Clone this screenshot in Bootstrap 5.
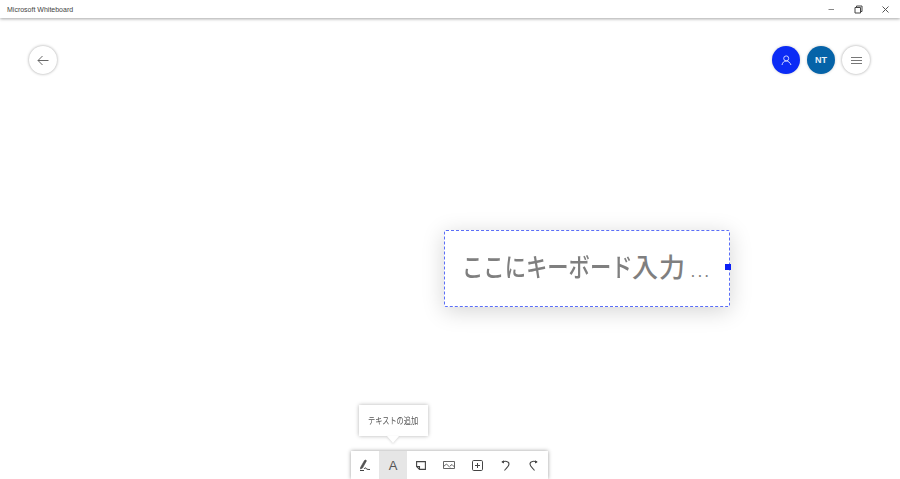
<!DOCTYPE html>
<html lang="ja">
<head>
<meta charset="utf-8">
<title>Microsoft Whiteboard</title>
<link href="https://cdn.jsdelivr.net/npm/bootstrap@5.3.0/dist/css/bootstrap.min.css" rel="stylesheet">
<style>
html,body{height:479px;overflow:hidden;background:#fff;}
body{font-family:"Noto Sans CJK JP","Liberation Sans",sans-serif;}
.wb-shell{height:479px;position:relative;}
.wb-title{height:18px;padding:0 1px 0 7px;box-shadow:0 1px 3px rgba(0,0,0,.35);font:7px/17px "Liberation Sans",sans-serif;color:#444;position:relative;z-index:2;}
.wb-win span{width:27px;height:17px;display:flex;align-items:center;justify-content:center;}
.wb-top{padding:28px 30px 0 28.5px;}
.wb-circ{width:28px;height:28px;border-radius:50%;background:#fff;box-shadow:0 0 3px rgba(0,0,0,.38);display:flex;align-items:center;justify-content:center;padding:0;border:0;}
.wb-right{gap:7px;}
.wb-blue{background:#0b2bf5;box-shadow:0 0 3px rgba(0,0,0,.2);}
.wb-nt{background:#0563a8;color:#e8f0f8;font:600 9px/1 "Liberation Sans",sans-serif;box-shadow:0 0 3px rgba(0,0,0,.2);}
.wb-textbox{position:absolute;left:444px;top:230px;width:286px;height:77px;background:#fff;border:1px dashed #5a6ef7;border-radius:2px;box-shadow:0 4px 22px rgba(0,0,0,.17);color:#7f7f7f;font:500 26px/1 "Noto Sans CJK JP",sans-serif;display:flex;align-items:center;padding:0 0 5px 17px;white-space:nowrap;}
.wb-kana{display:inline-block;width:170px;transform:scaleX(.82);transform-origin:left center;}
.wb-kanji{letter-spacing:1px;}
.wb-dots{font-size:13px;letter-spacing:3px;margin-left:5px;padding-top:11px;}
.wb-handle{position:absolute;right:-2px;top:33px;width:6px;height:6px;background:#0b1ff5;}
.wb-bar{height:28px;background:#fff;box-shadow:0 0 4px rgba(0,0,0,.4);width:197px;}
.wb-barwrap{position:absolute;left:351px;top:451px;}
.wb-tool{width:28px;height:28px;display:flex;align-items:center;justify-content:center;padding:0;border:0;background:transparent;color:#555;font:13px/1 "Liberation Sans",sans-serif;}
.wb-tool.wb-on{background:#e6e6e6;}
.wb-tip{position:absolute;left:8px;top:-46px;width:69px;height:31px;background:#fff;box-shadow:0 0 4px rgba(0,0,0,.3);font:9px/31px "Noto Sans CJK JP",sans-serif;color:#555;white-space:nowrap;padding-left:9px;}
.wb-tiptext{display:inline-block;transform:scaleX(.8);transform-origin:left center;}
.wb-tip::after{content:"";position:absolute;left:28px;top:31px;border-left:6px solid transparent;border-right:6px solid transparent;border-top:7px solid #fff;filter:drop-shadow(0 1px 1px rgba(0,0,0,.15));}
svg{display:block;}
</style>
</head>
<body class="m-0">
<div class="wb-shell">
  <div class="wb-title d-flex justify-content-between align-items-center">
    <span>Microsoft Whiteboard</span>
    <div class="wb-win d-flex">
      <span><svg width="9" height="9" viewBox="0 0 9 9"><path d="M1.5 4.5H7" stroke="#888" fill="none"/></svg></span>
      <span><svg width="9" height="9" viewBox="0 0 9 9"><path d="M1 2.5H6.5V8H1Z M2.5 2.5V1H8V6.5H6.5" stroke="#444" fill="none"/></svg></span>
      <span><svg width="9" height="9" viewBox="0 0 9 9"><path d="M1.5 1.5L7.5 7.5M7.5 1.5L1.5 7.5" stroke="#555" fill="none"/></svg></span>
    </div>
  </div>
  <div class="wb-top d-flex justify-content-between align-items-center">
    <button class="wb-circ" aria-label="戻る"><svg width="12" height="11" viewBox="0 0 12 11"><path d="M11.5 5.5H1M5.5 1L1 5.5L5.5 10" stroke="#666" fill="none"/></svg></button>
    <div class="wb-right d-flex">
      <button class="wb-circ wb-blue" aria-label="共有"><svg width="11" height="11" viewBox="0 0 11 11"><circle cx="5.2" cy="3.4" r="2.5" stroke="#cfd6ff" fill="none"/><path d="M1 10C1.5 7.5 3 6 5.2 6C7.4 6 9 7.5 10 10" stroke="#cfd6ff" fill="none"/></svg></button>
      <button class="wb-circ wb-nt">NT</button>
      <button class="wb-circ" aria-label="メニュー"><svg width="11" height="9" viewBox="0 0 11 9"><path d="M0 1.5H11M0 4.5H11M0 7.5H11" stroke="#777" fill="none"/></svg></button>
    </div>
  </div>
  <div class="wb-textbox"><span class="wb-kana">ここにキーボード</span><span class="wb-kanji">入力</span><span class="wb-dots">...</span><span class="wb-handle"></span></div>
  <div class="wb-barwrap">
    <div class="wb-tip"><span class="wb-tiptext">テキストの追加</span></div>
    <div class="wb-bar d-flex">
      <button class="wb-tool" aria-label="ペン"><svg width="12" height="12" viewBox="0 0 12 12"><path d="M1.5 8.5L5.5 1.5C6.3 .5 7.5 1 7.2 2.2L3.5 9L1.5 10Z" fill="#555" stroke="#444" stroke-width=".6"/><path d="M5 10C6 8.5 7 8.5 7.5 10C8.5 10.5 9.5 10.5 11 10.5M1 11.5H5" stroke="#444" fill="none"/></svg></button>
      <button class="wb-tool wb-on">A</button>
      <button class="wb-tool" aria-label="付箋"><svg width="10" height="9" viewBox="0 0 10 9"><path d="M.6 .6H9.4V8.4H3.5L.6 5.5Z M.6 5.5H3.5V8.4" stroke="#444" fill="none" stroke-width="1.1"/></svg></button>
      <button class="wb-tool" aria-label="画像"><svg width="12" height="8" viewBox="0 0 12 8"><path d="M.5 .5H11.5V7.5H.5Z M.5 5.5L3.5 3L7 6.5M7 5L9 3.5L11.5 6" stroke="#555" fill="none" stroke-width=".9"/></svg></button>
      <button class="wb-tool" aria-label="追加"><svg width="11" height="11" viewBox="0 0 11 11"><rect x=".5" y=".5" width="10" height="10" rx="1.2" stroke="#444" fill="none"/><path d="M5.5 3V8M3 5.5H8" stroke="#444" fill="none"/></svg></button>
      <button class="wb-tool" aria-label="元に戻す"><svg width="9" height="11" viewBox="0 0 9 11"><path d="M1 2C4 .8 8 1 8 4C8 6.5 5.5 8 3.5 10.5" stroke="#444" fill="none" stroke-width="1.1"/><path d="M.3 2L3 .3L3 3.5Z" fill="#444"/></svg></button>
      <button class="wb-tool" aria-label="やり直す"><svg width="9" height="11" viewBox="0 0 9 11"><path d="M8 2C5 .8 1 1 1 4C1 6.5 3.5 8 5.5 10.5" stroke="#444" fill="none" stroke-width="1.1"/><path d="M8.7 2L6 .3L6 3.5Z" fill="#444"/></svg></button>
    </div>
  </div>
</div>
<script src="https://cdn.jsdelivr.net/npm/bootstrap@5.3.0/dist/js/bootstrap.bundle.min.js"></script>
</body>
</html>
